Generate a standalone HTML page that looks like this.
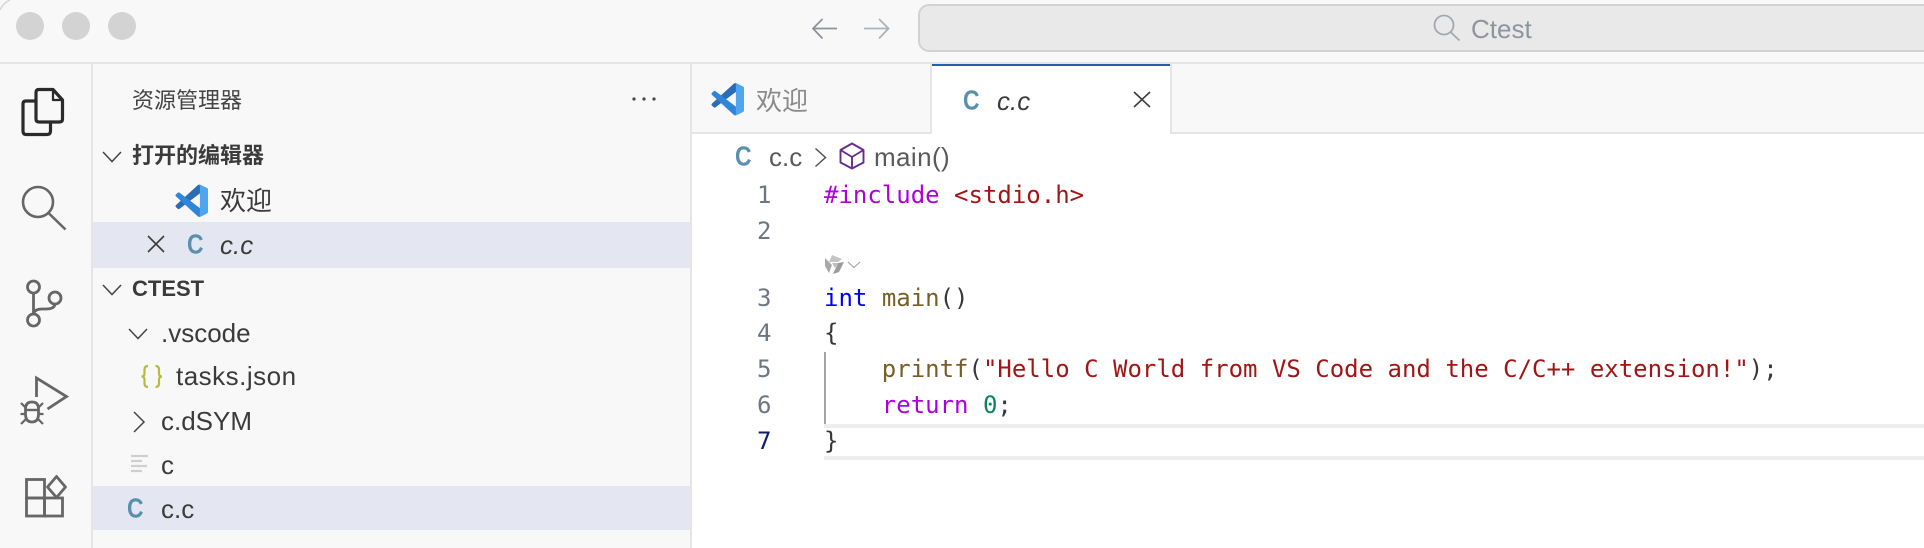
<!DOCTYPE html>
<html lang="zh">
<head>
<meta charset="utf-8">
<title>Ctest</title>
<style>
html,body{margin:0;padding:0;background:#fff;}
body{width:1924px;height:548px;position:relative;overflow:hidden;font-family:"Liberation Sans","Noto Sans CJK SC",sans-serif;}
.b{position:absolute;}
.t{position:absolute;white-space:pre;font-size:26px;line-height:36px;height:36px;color:#3b3b3b;}
.s{font-size:22px;}
.h{font-weight:bold;font-size:22px;color:#3b3b3b;}
.c{font-weight:bold;color:#5a8fae;font-size:26px;transform:scale(.88,1.06);transform-origin:left center;}
.m{position:absolute;white-space:pre;font-family:"DejaVu Sans Mono","Liberation Mono",monospace;font-size:24px;line-height:36px;height:36px;color:#383838;}
.n{color:#6e7681;}
svg{position:absolute;left:0;top:0;}
</style>
</head>
<body>
<!-- backgrounds -->
<div class="b" style="left:0;top:0;width:1924px;height:63px;background:#f8f8f8"></div>
<div class="b" style="left:0;top:62px;width:1924px;height:2px;background:#e5e5e5"></div>
<div class="b" style="left:0;top:64px;width:91px;height:484px;background:#f8f8f8"></div>
<div class="b" style="left:91px;top:64px;width:2px;height:484px;background:#e5e5e5"></div>
<div class="b" style="left:93px;top:64px;width:597px;height:484px;background:#f8f8f8"></div>
<div class="b" style="left:690px;top:64px;width:2px;height:484px;background:#e5e5e5"></div>
<div class="b" style="left:692px;top:64px;width:1232px;height:68px;background:#f8f8f8"></div>
<div class="b" style="left:692px;top:132px;width:1232px;height:2px;background:#e5e5e5"></div>
<!-- search box -->
<div class="b" style="left:918px;top:4px;width:1020px;height:44px;background:#e9e9e9;border:2px solid #d2d2d2;border-radius:11px"></div>
<!-- traffic lights -->
<div class="b" style="left:16px;top:12px;width:28px;height:28px;border-radius:50%;background:#d3d3d3"></div>
<div class="b" style="left:62px;top:12px;width:28px;height:28px;border-radius:50%;background:#d3d3d3"></div>
<div class="b" style="left:108px;top:12px;width:28px;height:28px;border-radius:50%;background:#d3d3d3"></div>
<!-- selected rows -->
<div class="b" style="left:93px;top:222px;width:597px;height:46px;background:#e4e6f1"></div>
<div class="b" style="left:93px;top:486px;width:597px;height:44px;background:#e4e6f1"></div>
<!-- tabs -->
<div class="b" style="left:930px;top:64px;width:2px;height:68px;background:#e5e5e5"></div>
<div class="b" style="left:932px;top:64px;width:238px;height:70px;background:#fff"></div>
<div class="b" style="left:932px;top:64px;width:238px;height:2px;background:#2a5db0"></div>
<div class="b" style="left:1170px;top:64px;width:2px;height:68px;background:#e5e5e5"></div>
<!-- current line highlight -->
<div class="b" style="left:824px;top:424px;width:1100px;height:28px;border-top:4px solid #eeeeee;border-bottom:4px solid #eeeeee"></div>
<!-- indent guide -->
<div class="b" style="left:824px;top:352px;width:2px;height:72px;background:#a3a3a3"></div>

<!-- icons -->
<svg width="1924" height="548" viewBox="0 0 1924 548" fill="none">
  <path d="M0 10 Q3 3 10 0" stroke="#d8d8d8" stroke-width="1.5"/>
  <!-- explorer -->
  <g stroke="#2a2a2a" stroke-width="3.2" stroke-linejoin="round" stroke-linecap="round">
    <path d="M39 89.5H53L62.5 100V119Q62.5 122 59.5 122H39Q36 122 36 119V92.5Q36 89.5 39 89.5Z"/>
    <path d="M53 89.5V100H62.5" stroke-width="2.2"/>
    <path d="M36 101H26Q23 101 23 104V131Q23 134.5 26 134.5H47Q50.5 134.5 50.5 131V122"/>
  </g>
  <!-- search -->
  <g stroke="#666" stroke-width="2.6">
    <circle cx="38" cy="202" r="15"/>
    <path d="M48.5 213L65.5 229.5"/>
  </g>
  <!-- git -->
  <g stroke="#666" stroke-width="2.8">
    <circle cx="33.5" cy="287" r="6"/>
    <circle cx="55" cy="298" r="6"/>
    <circle cx="33.5" cy="320" r="6"/>
    <path d="M33.5 293V314"/>
    <path d="M55 304Q54.500 309 46 309H42Q34.500 309 33.5 314"/>
  </g>
  <!-- debug -->
  <g stroke="#666" stroke-width="2.8">
    <path d="M36.5 397V378L66.500 396.500L47.500 409"/>
    <path d="M25.500 409Q25.500 402 32 402Q38.500 402 38.500 409V414Q38.500 422 32 422Q25.500 422 25.500 414Z"/>
    <path d="M25.500 410H38.500" stroke-width="2.4"/>
    <path d="M21 403L26 408M43 403L38 408M20.500 414H25.500M43.500 414H38.500M21 424L26 419M43 424L38 419" stroke-width="2.2"/>
  </g>
  <!-- extensions -->
  <g stroke="#666" stroke-width="2.8">
    <rect x="26.5" y="479.5" width="18" height="18.5"/>
    <rect x="26.5" y="498" width="18" height="18"/>
    <rect x="44.5" y="498" width="18" height="18"/>
    <path d="M56.5 476.5L65.5 487L56.5 497.5L47.5 487Z" stroke-linejoin="round"/>
  </g>
  <!-- nav arrows -->
  <g stroke-width="1.8">
    <path d="M837 28.5H813M822.5 19L813 28.5L822.5 38.5" stroke="#8e939b"/>
    <path d="M864 28.5H888.500M879 19L888.500 28.5L879 38.5" stroke="#aeb1b6"/>
  </g>
  <!-- title search -->
  <g stroke="#a4a8ae" stroke-width="1.8">
    <circle cx="1444" cy="25" r="9.5"/>
    <path d="M1450.5 32L1459.5 40.5"/>
  </g>
  <!-- dots -->
  <g fill="#444">
    <circle cx="634" cy="99" r="1.6"/><circle cx="644" cy="99" r="1.6"/><circle cx="654" cy="99" r="1.6"/>
  </g>
  <!-- chevrons -->
  <g stroke="#444" stroke-width="1.5">
    <path d="M103 152L112 161.5L121 152"/>
    <path d="M103 285L112 294.5L121 285"/>
    <path d="M129 329L138 338.5L147 329"/>
    <path d="M134 412L144 422L134 432"/>
  </g>
  <!-- close x -->
  <g stroke="#3c3c3c" stroke-width="1.6">
    <path d="M148 236L164 252M164 236L148 252"/>
    <path d="M1134 92L1150 107M1150 92L1134 107"/>
  </g>
  <!-- json braces -->
  <g stroke="#b9ba42" stroke-width="2.2">
    <path d="M148 366Q144.5 366 144.5 369.5V373.5Q144.5 376.500 141.5 376.500Q144.5 376.500 144.5 379.5V383.5Q144.5 387 148 387"/>
    <path d="M155.5 366Q159 366 159 369.500V373.5Q159 376.500 162 376.500Q159 376.500 159 379.500V383.5Q159 387 155.5 387"/>
  </g>
  <!-- binary file lines -->
  <g stroke="#cfcfcf" stroke-width="2.2">
    <path d="M131 456H148M131 461H142M131 466H147M131 471H142"/>
  </g>
  <!-- breadcrumb chevron -->
  <path d="M815.5 148.5L825.5 157.5L815.5 166.5" stroke="#555" stroke-width="1.5"/>
  <!-- symbol box -->
  <g stroke="#652d90" stroke-width="1.9" stroke-linejoin="round">
    <path d="M852 143.5L863.5 150V162.5L852 168.5L840.5 162.5V150Z"/>
    <path d="M840.5 150L852 157L863.5 150M852 157V168.5"/>
  </g>
  <!-- sparkle hint -->
  <path d="M832 255L842 259L838 262H829Z" fill="#c4c4c4"/>
  <path d="M825 258L832 265L829 273L825 266Z" fill="#a8a8a8"/>
  <path d="M844 262L839 272L833 274L838 263Z" fill="#9c9c9c"/>
  <path d="M832 263H838L835 268Z" fill="#bdbdbd"/>
  <path d="M848 262L854 267.5L860 262" stroke="#a0a0a0" stroke-width="1.1"/>
  <!-- vscode logos -->
  <g transform="translate(175.5 184.5) scale(.325)">
    <path fill="#2a6cb6" d="M96.46 10.8L75.86.88C73.47-.27 70.62.21 68.75 2.08L1.3 63.58C-.52 65.24-.51 68.09 1.3 69.75L6.81 74.75C8.3 76.1 10.53 76.2 12.13 74.99L93.36 13.37C96.09 11.3 100 13.25 100 16.67V16.43C100 14.03 98.62 11.84 96.46 10.8Z"/>
    <path fill="#2f86d8" d="M96.46 89.2L75.86 99.12C73.47 100.27 70.62 99.79 68.75 97.92L1.3 36.42C-.52 34.76-.51 31.91 1.3 30.25L6.81 25.25C8.3 23.9 10.53 23.8 12.13 25.01L93.36 86.63C96.09 88.7 100 86.75 100 83.33V83.57C100 85.97 98.62 88.16 96.46 89.2Z"/>
    <path fill="#4fa6ee" d="M75.86 99.13C73.47 100.27 70.62 99.79 68.75 97.92C71.06 100.22 75 98.59 75 95.33V4.67C75 1.41 71.06-.22 68.75 2.08C70.62.21 73.47-.27 75.86.87L96.46 10.78C98.62 11.82 100 14.01 100 16.41V83.59C100 85.99 98.62 88.18 96.46 89.22Z"/>
  </g>
  <g transform="translate(711.5 83) scale(.325)">
    <path fill="#2a6cb6" d="M96.46 10.8L75.86.88C73.47-.27 70.62.21 68.75 2.08L1.3 63.58C-.52 65.24-.51 68.09 1.3 69.75L6.81 74.75C8.3 76.1 10.53 76.2 12.13 74.99L93.36 13.37C96.09 11.3 100 13.25 100 16.67V16.43C100 14.03 98.62 11.84 96.46 10.8Z"/>
    <path fill="#2f86d8" d="M96.46 89.2L75.86 99.12C73.47 100.27 70.62 99.79 68.75 97.92L1.3 36.42C-.52 34.76-.51 31.91 1.3 30.25L6.81 25.25C8.3 23.9 10.53 23.8 12.13 25.01L93.36 86.63C96.09 88.7 100 86.75 100 83.33V83.57C100 85.97 98.62 88.16 96.46 89.2Z"/>
    <path fill="#4fa6ee" d="M75.86 99.13C73.47 100.27 70.62 99.79 68.75 97.92C71.06 100.22 75 98.59 75 95.33V4.67C75 1.41 71.06-.22 68.75 2.08C70.62.21 73.47-.27 75.86.87L96.46 10.78C98.62 11.82 100 14.01 100 16.41V83.59C100 85.99 98.62 88.18 96.46 89.22Z"/>
  </g>
</svg>

<!-- title -->
<div class="t" style="left:1471px;top:11px;color:#8f959e">Ctest</div>

<!-- sidebar -->
<div class="t s" style="left:132px;top:83px;color:#444">资源管理器</div>
<div class="t h" style="left:132px;top:138px">打开的编辑器</div>
<div class="t" style="left:220px;top:183px">欢迎</div>
<div class="t c" style="left:187px;top:226px">C</div>
<div class="t" style="left:220px;top:227px;font-style:italic">c.c</div>
<div class="t h" style="left:132px;top:271px">CTEST</div>
<div class="t" style="left:161px;top:315px">.vscode</div>
<div class="t" style="left:176px;top:358px;letter-spacing:.5px">tasks.json</div>
<div class="t" style="left:161px;top:403px">c.dSYM</div>
<div class="t" style="left:161px;top:447px">c</div>
<div class="t c" style="left:127px;top:490px">C</div>
<div class="t" style="left:161px;top:491px">c.c</div>

<!-- tabs text -->
<div class="t" style="left:756px;top:83px;color:#8a8a8a">欢迎</div>
<div class="t c" style="left:963px;top:82px">C</div>
<div class="t" style="left:997px;top:83px;font-style:italic">c.c</div>

<!-- breadcrumb -->
<div class="t c" style="left:735px;top:138px">C</div>
<div class="t" style="left:769px;top:139px;color:#5a5a5a">c.c</div>
<div class="t" style="left:874px;top:139px;color:#5a5a5a;letter-spacing:.4px">main()</div>

<!-- line numbers -->
<div class="m n" style="left:757px;top:177px">1</div>
<div class="m n" style="left:757px;top:213px">2</div>
<div class="m n" style="left:757px;top:280px">3</div>
<div class="m n" style="left:757px;top:315px">4</div>
<div class="m n" style="left:757px;top:351px">5</div>
<div class="m n" style="left:757px;top:387px">6</div>
<div class="m" style="left:757px;top:423px;color:#0b216f">7</div>

<!-- code -->
<div class="m" style="left:824px;top:177px"><span style="color:#af00db">#include</span> <span style="color:#a31515">&lt;stdio.h&gt;</span></div>
<div class="m" style="left:824px;top:280px"><span style="color:#0000ff">int</span> <span style="color:#795e26">main</span>()</div>
<div class="m" style="left:824px;top:315px">{</div>
<div class="m" style="left:824px;top:351px">    <span style="color:#795e26">printf</span>(<span style="color:#a31515">"Hello C World from VS Code and the C/C++ extension!"</span>);</div>
<div class="m" style="left:824px;top:387px">    <span style="color:#af00db">return</span> <span style="color:#098658">0</span>;</div>
<div class="m" style="left:824px;top:423px">}</div>
</body>
</html>
